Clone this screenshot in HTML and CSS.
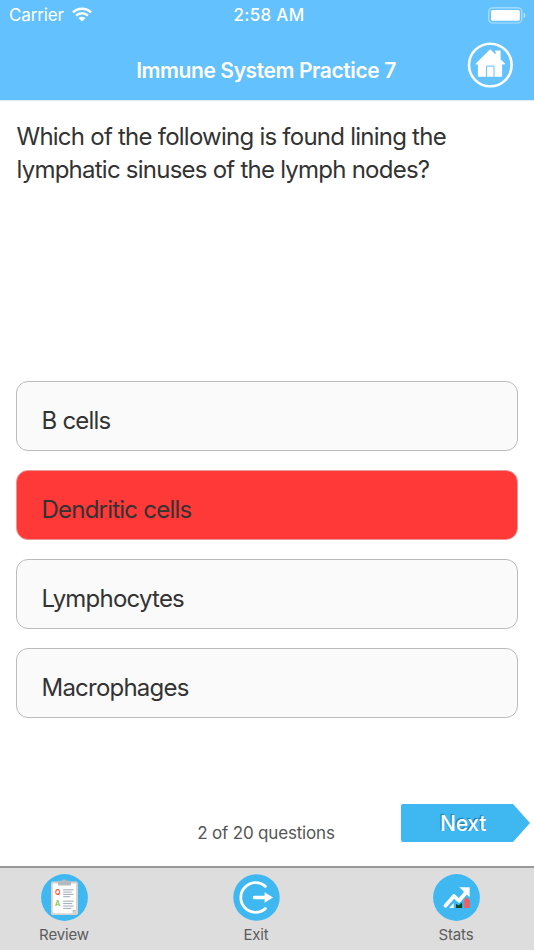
FILE: index.html
```html
<!DOCTYPE html>
<html lang="en">
<head>
    <meta charset="UTF-8">
    <meta name="viewport" content="width=device-width, initial-scale=1.0">
    <title>Immune System Practice 7</title>
    <link rel="stylesheet" href="styles.css">
</head>
<body>
    <header class="header">
        <div class="status-bar">
            <div class="network">
                <span class="carrier">Carrier</span>
                <svg width="20" height="15" viewBox="0 0 20 15">
                    <path d="M1 5.4C6 .6 14 .6 19 5.4M4.1 8.6c3.3-3.1 8.5-3.1 11.8 0" fill="none" stroke="#fff" stroke-width="2.6"/>
                    <path d="M6.5 11.1c2-1.8 5-1.8 7 0L10 14.6z" fill="#fff"/>
                </svg>
            </div>
            <span class="time">2:58 AM</span>
            <svg class="battery" width="38" height="17" viewBox="0 0 38 17">
                <rect x=".8" y=".8" width="33" height="15.2" rx="3.8" fill="none" stroke="#fff" stroke-opacity=".5" stroke-width="1.2"/>
                <rect x="3" y="3" width="28.8" height="10.8" rx="1.6" fill="#fff"/>
                <path d="M35.6 5.6c2.4.8 2.4 4.8 0 5.6z" fill="#fff" fill-opacity=".5"/>
            </svg>
        </div>
        <div class="nav-bar">
            <h1 class="title">Immune System Practice 7</h1>
            <a class="home" href="#" aria-label="Home">
                <svg width="46" height="46" viewBox="0 0 46 46">
                    <circle cx="23.3" cy="23" r="21.3" fill="none" stroke="#fff" stroke-width="2.6"/>
                    <path d="M23.2 7.3l5 4.8V8.5h5.4v8.8l4.3 4.1v1.1h-2.8v12.3H10.9V22.5H8.8v-1.1z" fill="#fff"/>
                    <path d="M19.6 34.8V24.1h7.4v10.7" fill="none" stroke="#63c1fe" stroke-width="1"/>
                    <path d="M28.2 12.1v-2" stroke="#63c1fe" stroke-width=".8"/>
                </svg>
            </a>
        </div>
    </header>

    <main class="quiz">
        <p class="question">Which of the following is found lining the lymphatic sinuses of the lymph nodes?</p>
        <div class="answers">
            <button class="answer">B cells</button>
            <button class="answer wrong">Dendritic cells</button>
            <button class="answer">Lymphocytes</button>
            <button class="answer">Macrophages</button>
        </div>
        <div class="progress">
            <span class="count">2 of 20 questions</span>
            <button class="next">Next</button>
        </div>
    </main>

    <nav class="tab-bar">
        <a class="tab" href="#">
            <svg width="48" height="48" viewBox="0 0 48 48">
                <circle cx="24.5" cy="23.5" r="23.4" fill="#3fb8f2"/>
                <rect x="11" y="7.6" width="27" height="33.4" rx="1.8" fill="#d7d3d0"/>
                <path d="M12.8 9.6h23.2v26.4l-3.3 3.2H12.8z" fill="#fff"/>
                <path d="M36 36h-3.3v3.2z" fill="#b7bec5"/>
                <rect x="17.8" y="6.8" width="13.2" height="4.6" rx="1" fill="#b4bac2"/>
                <rect x="22.2" y="5.4" width="4.4" height="2.5" rx="1.2" fill="#b4bac2"/>
                <path d="M23.2 15.8h10.4M23.2 18.1h8.5M23.2 20.4h10.4M23.2 22.7h7M23.2 27.2h10.4M23.2 29.6h9M23.2 32h10.4M23.2 34.4h8" stroke="#9aa8b8" stroke-width="1"/>
                <text class="letter-q" x="14.9" y="21.4">Q</text>
                <text class="letter-a" x="15.1" y="32.4">A</text>
            </svg>
            <span>Review</span>
        </a>
        <a class="tab" href="#">
            <svg width="48" height="48" viewBox="0 0 48 48">
                <circle cx="24.5" cy="23.5" r="23.2" fill="#3fb8f2"/>
                <path d="M33.4 12.4A14.8 14.8 0 1 0 33.4 34.6" fill="none" stroke="#fff" stroke-width="2.8" stroke-linecap="round"/>
                <path d="M22.2 21.8h10.4v-3.5l8.4 5.2-8.4 5.2v-3.5H22.2q-1.4 0-1.4-1.7t1.4-1.7z" fill="#fff"/>
            </svg>
            <span>Exit</span>
        </a>
        <a class="tab" href="#">
            <svg width="48" height="48" viewBox="0 0 48 48">
                <circle cx="24.5" cy="23.5" r="23.4" fill="#3fb8f2"/>
                <path d="M17.2 34l4.5-5v5z" fill="#fff"/>
                <path d="M24 34v-4l2.8 1.2 3.4-3v5.8z" fill="#0c4a25"/>
                <path d="M32.2 34v-8.6l3-2.2 2.6 3.3V34z" fill="#f45d60"/>
                <path d="M13.4 31.7l8.6-9.6 5 4.6 7.5-8.7" fill="none" stroke="#fff" stroke-width="3.8" stroke-linejoin="round" stroke-linecap="round"/>
                <path d="M27.4 13.3h10.2v9.9z" fill="#fff"/>
            </svg>
            <span>Stats</span>
        </a>
    </nav>
</body>
</html>
```

FILE: styles.css
```css
* {
    box-sizing: border-box;
}

body {
    margin: 0;
    height: 950px;
    display: flex;
    flex-direction: column;
    overflow: hidden;
    font-family: Inter, "Liberation Sans", sans-serif;
    background: #fff;
    color: #333;
}

a {
    color: inherit;
    text-decoration: none;
}

button {
    border: none;
    font: inherit;
    color: inherit;
    text-align: left;
}

/* Header */
.header {
    height: 100px;
    background: #63c1fe;
    color: #fff;
}

.status-bar {
    display: grid;
    grid-template-columns: 1fr auto 1fr;
    align-items: center;
    height: 30px;
    padding: 0 8px 0 9px;
    font-size: 17px;
}

.network {
    display: flex;
    align-items: center;
    gap: 8px;
}

.network svg {
    margin-top: -2px;
}

.carrier {
    letter-spacing: -0.15px;
}

.time {
    padding-left: 3px;
    font-weight: 500;
    letter-spacing: 0.3px;
}

.battery {
    justify-self: end;
}

.nav-bar {
    display: grid;
    grid-template-columns: 1fr auto 1fr;
    height: 70px;
    padding: 12px 21px 0 19px;
}

.title {
    grid-column: 2;
    margin: 15px 0 0;
    font-size: 21px;
    line-height: 28px;
    font-weight: 600;
    letter-spacing: -0.4px;
}

.home {
    justify-self: end;
    height: 46px;
}

/* Question and answers */
.quiz {
    flex: 1;
    display: flex;
    flex-direction: column;
    border-top: 1px solid #d8effe;
}

.question {
    height: 280px;
    margin: 0;
    padding: 20px 60px 0 16.5px;
    font-size: 24px;
    line-height: 32.5px;
    letter-spacing: -0.76px;
}

.answers {
    display: flex;
    flex-direction: column;
    gap: 19px;
    padding: 0 16px;
}

.answer {
    height: 70px;
    padding: 9px 24.5px 0;
    border: 1px solid #bbb;
    border-radius: 12px;
    background: #fafafa;
    font-size: 24px;
    letter-spacing: -0.78px;
}

.wrong {
    border-color: #e59a9a;
    background: #ff3838;
}

.progress {
    display: grid;
    grid-template-columns: 1fr auto 1fr;
    margin-top: 86px;
    padding: 0 4px;
}

.count {
    grid-column: 2;
    margin: 18px 2px 0 0;
    font-size: 17px;
    line-height: 22px;
    letter-spacing: -0.18px;
    color: #555;
}

.next {
    justify-self: end;
    width: 129px;
    height: 38px;
    padding: 0 0 0 39px;
    border-radius: 2px 0 0 2px;
    background: #3fb8f2;
    clip-path: polygon(0 0, 112px 0, 100% 50%, 112px 100%, 0 100%);
    color: #fff;
    font-size: 21px;
    font-weight: 500;
    letter-spacing: -0.2px;
    text-shadow: -1px -1px 1px rgba(0, 60, 100, 0.5);
}

/* Bottom tabs */
.tab-bar {
    display: grid;
    grid-template-columns: 80px 80px 80px;
    column-gap: 112px;
    height: 84px;
    padding: 6px 0 0 24px;
    border-top: 2px solid #999;
    background: #ddd;
}

.tab {
    display: flex;
    flex-direction: column;
    align-items: center;
    gap: 4px;
    font-size: 15px;
    line-height: 18px;
    letter-spacing: -0.15px;
    color: #5c5c5c;
}

.tab:last-child {
    margin: 0 -8px 0 8px;
}

.letter-q,
.letter-a {
    font-size: 7px;
    font-weight: 700;
    fill: #ee5b3c;
}

.letter-a {
    fill: #8ccb58;
}
```
